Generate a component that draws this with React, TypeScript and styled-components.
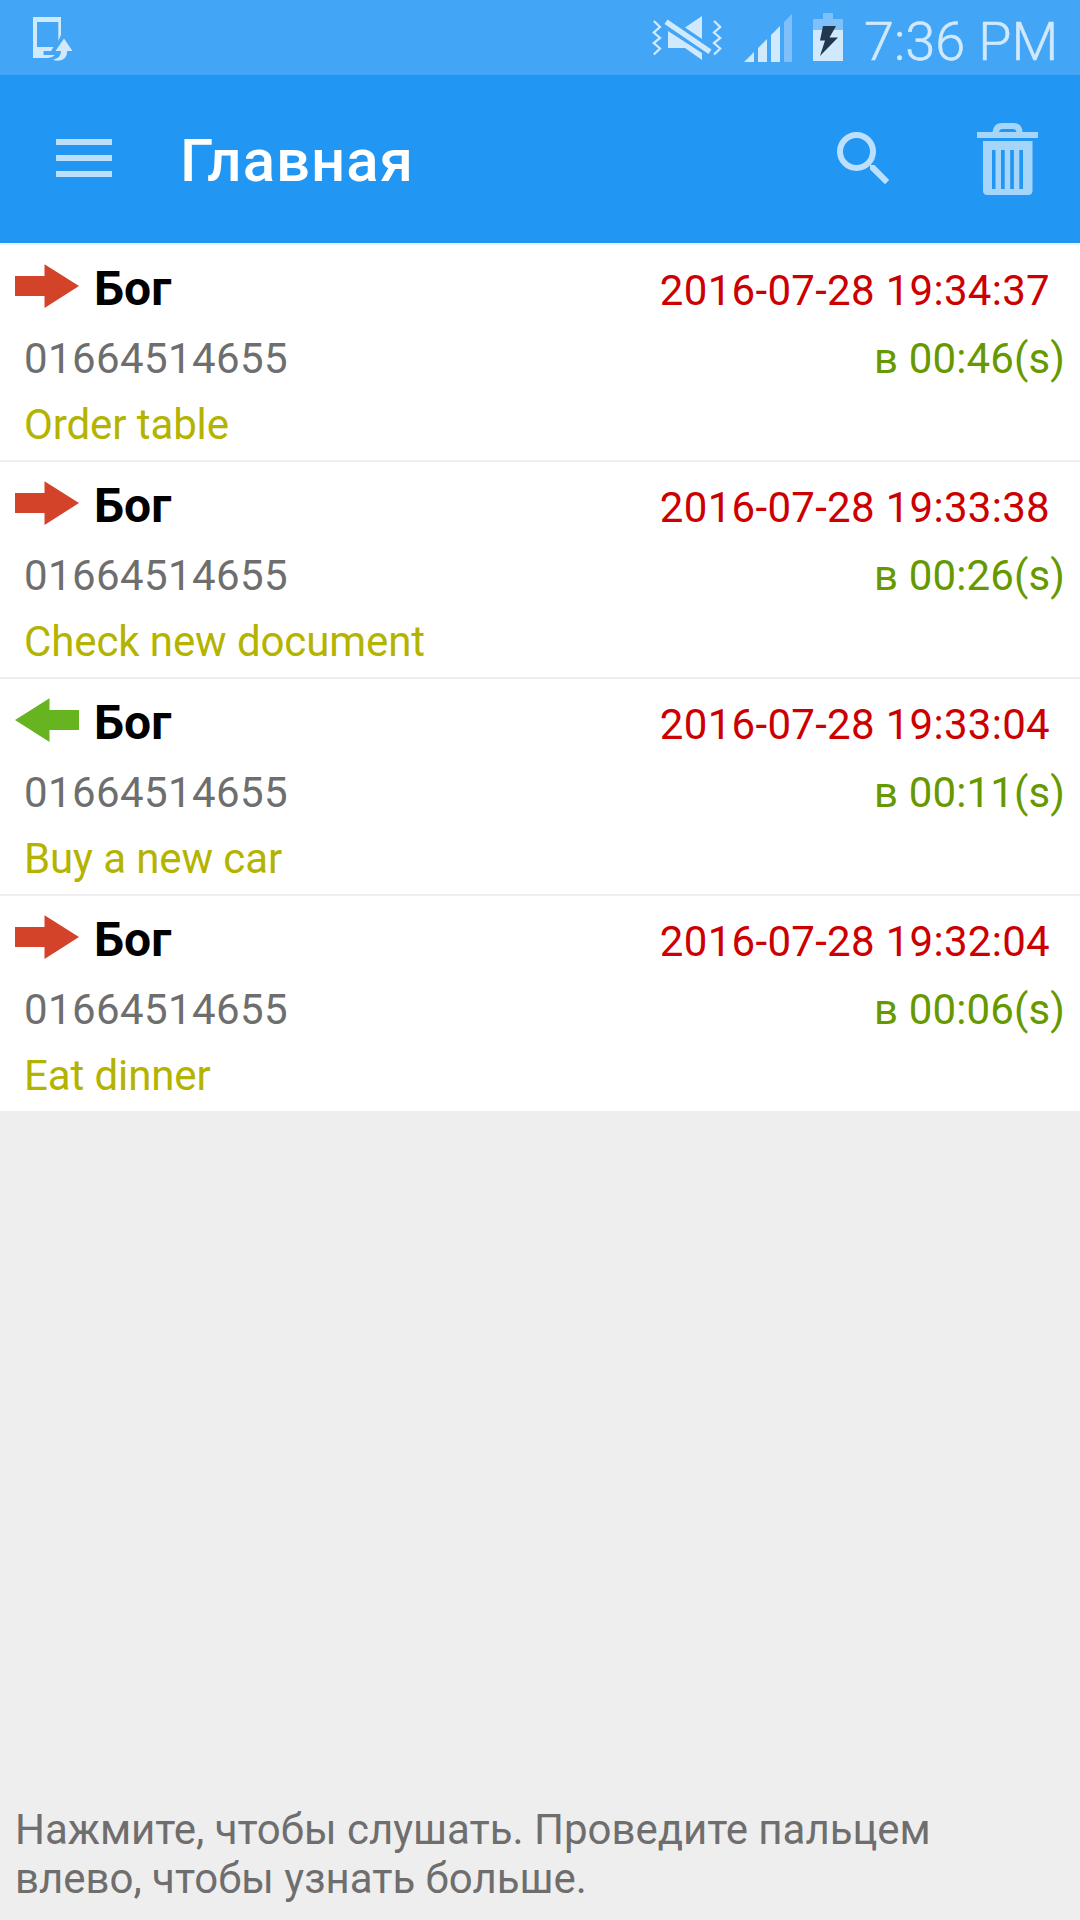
import React from "react";
import styled, { createGlobalStyle } from "styled-components";

const GlobalStyle = createGlobalStyle`
  * { box-sizing: border-box; }
  body { margin: 0; background: #eeeeee; }
`;

const Screen = styled.div`
  width: 1080px;
  height: 1920px;
  display: flex;
  flex-direction: column;
  background: #eeeeee;
  font-family: Roboto, "Noto Sans", sans-serif;
  overflow: hidden;
`;

const StatusBar = styled.div`
  height: 75px;
  flex: none;
  display: flex;
  align-items: flex-start;
  background: #42a5f6;
  padding: 0 23px 0 33px;
`;

const StatusIcons = styled.div`
  display: flex;
  margin-left: auto;
`;

const Glyph = styled.svg<{ $gap?: number; $top?: number }>`
  display: block;
  flex: none;
  margin-left: ${(p) => p.$gap ?? 0}px;
  margin-top: ${(p) => p.$top ?? 0}px;
`;

const Clock = styled.span`
  width: 193px;
  margin-left: 21px;
  font-size: 54px;
  font-weight: 300;
  line-height: 63px;
  padding-top: 10px;
  white-space: nowrap;
  color: #d0e9fd;
  -webkit-text-stroke: 0.5px #d0e9fd;
`;

const AppBar = styled.header`
  height: 168px;
  flex: none;
  display: flex;
  align-items: flex-start;
  background: #2196f3;
  padding: 0 42px 0 56px;
`;

const Title = styled.h1`
  margin: 51px auto 0 68px;
  font-size: 60px;
  font-weight: 500;
  line-height: 70px;
  letter-spacing: 1px;
  color: #ffffff;
  white-space: nowrap;
`;

const CallList = styled.ul`
  list-style: none;
  margin: 0;
  padding: 2px 0 0;
  flex: none;
`;

const CallRow = styled.li`
  height: 217px;
  background: #ffffff;
  border-bottom: 2px solid #eeeeee;
  padding: 15px 15px 0;
  display: flex;
  flex-direction: column;
`;

const TopLine = styled.div`
  display: flex;
  height: 63px;
`;

const Name = styled.span`
  margin: 1px auto 0 15px;
  font-size: 48px;
  font-weight: 700;
  line-height: 56px;
  color: #000000;
`;

const Stamp = styled.span`
  font-size: 42px;
  line-height: 49px;
  padding: 6px 15px 0 0;
  letter-spacing: 0.3px;
  color: #cc0000;
`;

const MidLine = styled.div`
  display: flex;
  justify-content: space-between;
  height: 66px;
  padding: 11px 0 0 9px;
  font-size: 42px;
  line-height: 49px;
`;

const Phone = styled.span`
  color: #6e6e6e;
  letter-spacing: 0.4px;
`;

const Duration = styled.span`
  color: #669900;
  letter-spacing: 0.12px;
`;

const Note = styled.div`
  padding: 11px 0 0 9px;
  font-size: 42px;
  line-height: 49px;
  letter-spacing: -0.1px;
  color: #b3b300;
`;

const Hint = styled.footer`
  margin-top: auto;
  padding: 0 15px 17px;
  font-size: 42px;
  line-height: 49px;
  letter-spacing: -0.02px;
  color: #6e6e6e;
`;

const FG = "#d0e9fd";
const DIM = "#80c0fa";

const DeviceIcon = () => (
  <Glyph $top={16} width="40" height="46" viewBox="33 16 40 46" fill={FG}>
    <path fillRule="evenodd" d="M33 17H61V35L58.3 41V22H37V47H53.5L51 51H43.5V55H55Q52 58 48 58H33Z" />
    <path d="M64 38.5L72.5 51H67.3Q67 60.5 58 60.8Q55 60.8 53 59.8Q61 58 61 51H55.5Z" />
  </Glyph>
);

const MuteIcon = () => (
  <Glyph $top={15} width="70" height="46" viewBox="652 15 70 46" fill={FG}>
    <path d="M702 16V39L685 27.5ZM668 31L702 53V60L685 48H668Z" />
    <path d="M667.5 19.5L711.5 49.5L708.5 54L664.5 24Z" />
    <path
      d="M653.8 21L660 27L653.8 32.5L660 38L653.8 43L660 48.5L653.8 54.5M714 21L720.2 27L714 32.5L720.2 38L714 43L720.2 48.5L714 54.5"
      fill="none"
      stroke={FG}
      strokeWidth="2.3"
    />
  </Glyph>
);

const SignalIcon = () => (
  <Glyph $gap={22} $top={14} width="48" height="48" viewBox="744 14 48 48" fill={FG}>
    <path d="M744 62L754 52V62ZM758 62V48L767 39V62ZM771 62V35L780 26V62Z" />
    <path d="M784 62V22L792 14V62Z" fill={DIM} />
  </Glyph>
);

const BatteryIcon = () => (
  <Glyph $gap={21} $top={13} width="30" height="48" viewBox="813 13 30 48">
    <path d="M813 19H823V13H833V19H843V30H813Z" fill={DIM} />
    <path d="M813 30H843V61H813Z" fill={FG} />
    <path d="M823 26H836L829.5 37.5H838L820 56L825 40.5H820Z" fill="#20394f" />
  </Glyph>
);

const MenuIcon = () => (
  <Glyph $top={64} width="56" height="38" viewBox="0 0 56 38" fill="#bcdffb">
    <path d="M0 0H56V6H0ZM0 16H56V22H0ZM0 32H56V38H0Z" />
  </Glyph>
);

const SearchIcon = () => (
  <Glyph $top={57} width="53" height="53" viewBox="0 0 53 53">
    <circle cx="19.5" cy="19.5" r="16.5" fill="none" stroke="#bcdffb" strokeWidth="6" />
    <path d="M33 33H37.5L52.2 48L48 52.2L33 37.5Z" fill="#bcdffb" />
  </Glyph>
);

const TrashIcon = () => (
  <Glyph $gap={87} $top={48} width="61" height="72" viewBox="977 123 61 72" fill="#a6d5fa">
    <path
      fillRule="evenodd"
      d="M977 132H992.5Q993.5 123 1002 123H1013.500Q1022 123 1022.500 132H1038V138H977ZM999 132H1016.500Q1016 129 1013 129H1002.500Q999.500 129 999 132Z"
    />
    <path
      fillRule="evenodd"
      d="M983 141H1032.500V190.500Q1032.500 195 1028 195H987.500Q983 195 983 190.500ZM992 150V189H995.500V150ZM1001 150V189H1004.700V150ZM1010.200 150V189H1013.900V150ZM1019.300 150V189H1023V150Z"
    />
  </Glyph>
);

type Direction = "out" | "in";

const ArrowIcon = ({ direction }: { direction: Direction }) => (
  <Glyph $top={4} width="64" height="45" viewBox="0 0 64 45">
    {direction === "out" ? (
      <path d="M0 12H29.500V0.200L64 22L29.500 44V32H0Z" fill="#d34329" />
    ) : (
      <path d="M64 12H34.500V0.200L0 22L34.500 44V32H64Z" fill="#66b420" />
    )}
  </Glyph>
);

const calls: { direction: Direction; date: string; duration: string; note: string }[] = [
  { direction: "out", date: "2016-07-28 19:34:37", duration: "в 00:46(s)", note: "Order table" },
  { direction: "out", date: "2016-07-28 19:33:38", duration: "в 00:26(s)", note: "Check new document" },
  { direction: "in", date: "2016-07-28 19:33:04", duration: "в 00:11(s)", note: "Buy a new car" },
  { direction: "out", date: "2016-07-28 19:32:04", duration: "в 00:06(s)", note: "Eat dinner" },
];

export default function App() {
  return (
    <Screen>
      <GlobalStyle />
      <StatusBar>
        <DeviceIcon />
        <StatusIcons>
          <MuteIcon />
          <SignalIcon />
          <BatteryIcon />
          <Clock>7:36 PM</Clock>
        </StatusIcons>
      </StatusBar>
      <AppBar>
        <MenuIcon />
        <Title>Главная</Title>
        <SearchIcon />
        <TrashIcon />
      </AppBar>
      <CallList>
        {calls.map((call) => (
          <CallRow key={call.date}>
            <TopLine>
              <ArrowIcon direction={call.direction} />
              <Name>Бог</Name>
              <Stamp>{call.date}</Stamp>
            </TopLine>
            <MidLine>
              <Phone>01664514655</Phone>
              <Duration>{call.duration}</Duration>
            </MidLine>
            <Note>{call.note}</Note>
          </CallRow>
        ))}
      </CallList>
      <Hint>Нажмите, чтобы слушать. Проведите пальцем влево, чтобы узнать больше.</Hint>
    </Screen>
  );
}
